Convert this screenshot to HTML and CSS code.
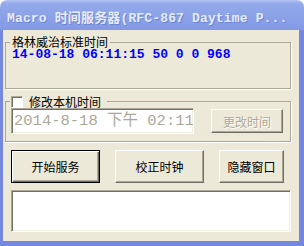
FILE: index.html
```html
<!DOCTYPE html>
<html lang="zh-CN">
<head>
  <meta charset="UTF-8"/>
  <title>Macro 时间服务器</title>
  <link rel="stylesheet" href="styles.css">
</head>
<body>

<div class="window">
  <div class="titlebar">
    <span class="title">Macro 时间服务器(RFC-867 Daytime P...</span>
  </div>

  <div class="client">
    <fieldset class="group group-gmt">
      <legend>格林威治标准时间</legend>
      <div class="gmt">14-08-18 06:11:15 50 0 0 968</div>
    </fieldset>

    <fieldset class="group group-local">
      <legend><span class="check"></span><span>修改本机时间</span></legend>
      <div class="edit-row">
        <div class="edit">2014-8-18 下午 02:11</div>
        <button class="btn btn-change" disabled>更改时间</button>
      </div>
    </fieldset>

    <div class="actions">
      <button class="btn btn-default btn-wide">开始服务</button>
      <button class="btn btn-wide">校正时钟</button>
      <button class="btn btn-hide">隐藏窗口</button>
    </div>

    <div class="log"></div>
  </div>
</div>

</body>
</html>
```

FILE: styles.css
```css
body {
  margin: 0;
  background: #fff;
  font-family: 'Noto Sans CJK SC', sans-serif;
  font-size: 12px;
  color: #000;
}
.window {
  width: 304px;
  height: 246px;
  display: flex;
  flex-direction: column;
  border-radius: 7px 7px 0 0;
  overflow: hidden;
}
.titlebar {
  height: 30px;
  flex: none;
  box-sizing: border-box;
  padding: 3px 0 0 7px;
  display: flex;
  align-items: center;
  background: linear-gradient(#b4c4f3 0%, #94a9eb 12%, #8aa1e8 60%, #8399e5 100%);
}
.title {
  font-family: 'Liberation Mono', 'Noto Sans CJK SC', monospace;
  font-weight: bold;
  font-size: 13px;
  letter-spacing: 0.15px;
  color: #e6ecfa;
  text-shadow: 1px 1px 0 #6f84cc;
  white-space: nowrap;
}
.client {
  flex: 1;
  background: #ece9d8;
  border-left: 3px solid #7488e0;
  border-right: 5px solid #7488e0;
  border-bottom: 5px solid #7488e0;
}
.group {
  box-sizing: border-box;
  width: 286px;
  margin: 0 0 0 2px;
  padding: 0 0 0 4px;
  border: 1px solid #aca899;
  box-shadow: 1px 1px 0 #fff;
  min-width: 0;
}
.group legend {
  padding: 0 2px;
  font-size: 12px;
  line-height: 12px;
}
.group-gmt {
  margin-top: 6px;
}
.gmt {
  margin: 0 0 0 2px;
  height: 40px;
  font-family: 'Liberation Mono', monospace;
  font-weight: bold;
  font-size: 13px;
  line-height: 14px;
  color: #0000ff;
  white-space: nowrap;
}
.group-local {
  margin-top: 6px;
  padding-bottom: 7px;
}
.group-local legend {
  display: flex;
  align-items: center;
  gap: 6px;
  height: 13px;
  padding: 0 6px 0 1px;
  line-height: 13px;
}
.check {
  width: 12px;
  height: 12px;
  box-sizing: border-box;
  background: #fff;
  border: 1px solid;
  border-color: #aca899 #fff #fff #aca899;
  box-shadow: inset 1px 1px 0 #716f64;
}
.edit-row {
  display: flex;
  align-items: center;
  gap: 17px;
  margin-left: 1px;
}
.edit {
  width: 183px;
  height: 26px;
  box-sizing: border-box;
  padding-left: 2px;
  background: #fff;
  border: 1px solid;
  border-color: #aca899 #fff #fff #aca899;
  box-shadow: inset 1px 1px 0 #716f64, inset -1px -1px 0 #f1efe2;
  font-family: 'Liberation Mono', 'Noto Sans CJK SC', monospace;
  font-size: 15.5px;
  line-height: 24px;
  color: #aca899;
  white-space: nowrap;
  overflow: hidden;
}
.btn {
  appearance: none;
  margin: 0;
  padding: 0;
  height: 33px;
  box-sizing: border-box;
  background: #ece9d8;
  border: 1px solid;
  border-color: #fff #716f64 #716f64 #fff;
  box-shadow: inset -1px -1px 0 #aca899;
  font-family: 'Noto Sans CJK SC', sans-serif;
  font-size: 12px;
  color: #000;
}
.btn-default {
  border-color: #000;
  box-shadow: inset 1px 1px 0 #fff, inset -1px -1px 0 #716f64, inset -2px -2px 0 #aca899;
}
.btn-change {
  width: 72px;
  height: 24px;
  color: #aca899;
  text-shadow: 1px 1px 0 #fff;
}
.actions {
  display: flex;
  gap: 15px;
  margin: 8px 0 0 8px;
}
.btn-wide {
  width: 89px;
}
.btn-hide {
  width: 65px;
}
.log {
  width: 280px;
  height: 42px;
  box-sizing: border-box;
  margin: 7px 0 0 8px;
  background: #fff;
  border: 1px solid;
  border-color: #aca899 #fff #fff #aca899;
  box-shadow: inset 1px 1px 0 #716f64, inset -1px -1px 0 #f1efe2;
}
```
